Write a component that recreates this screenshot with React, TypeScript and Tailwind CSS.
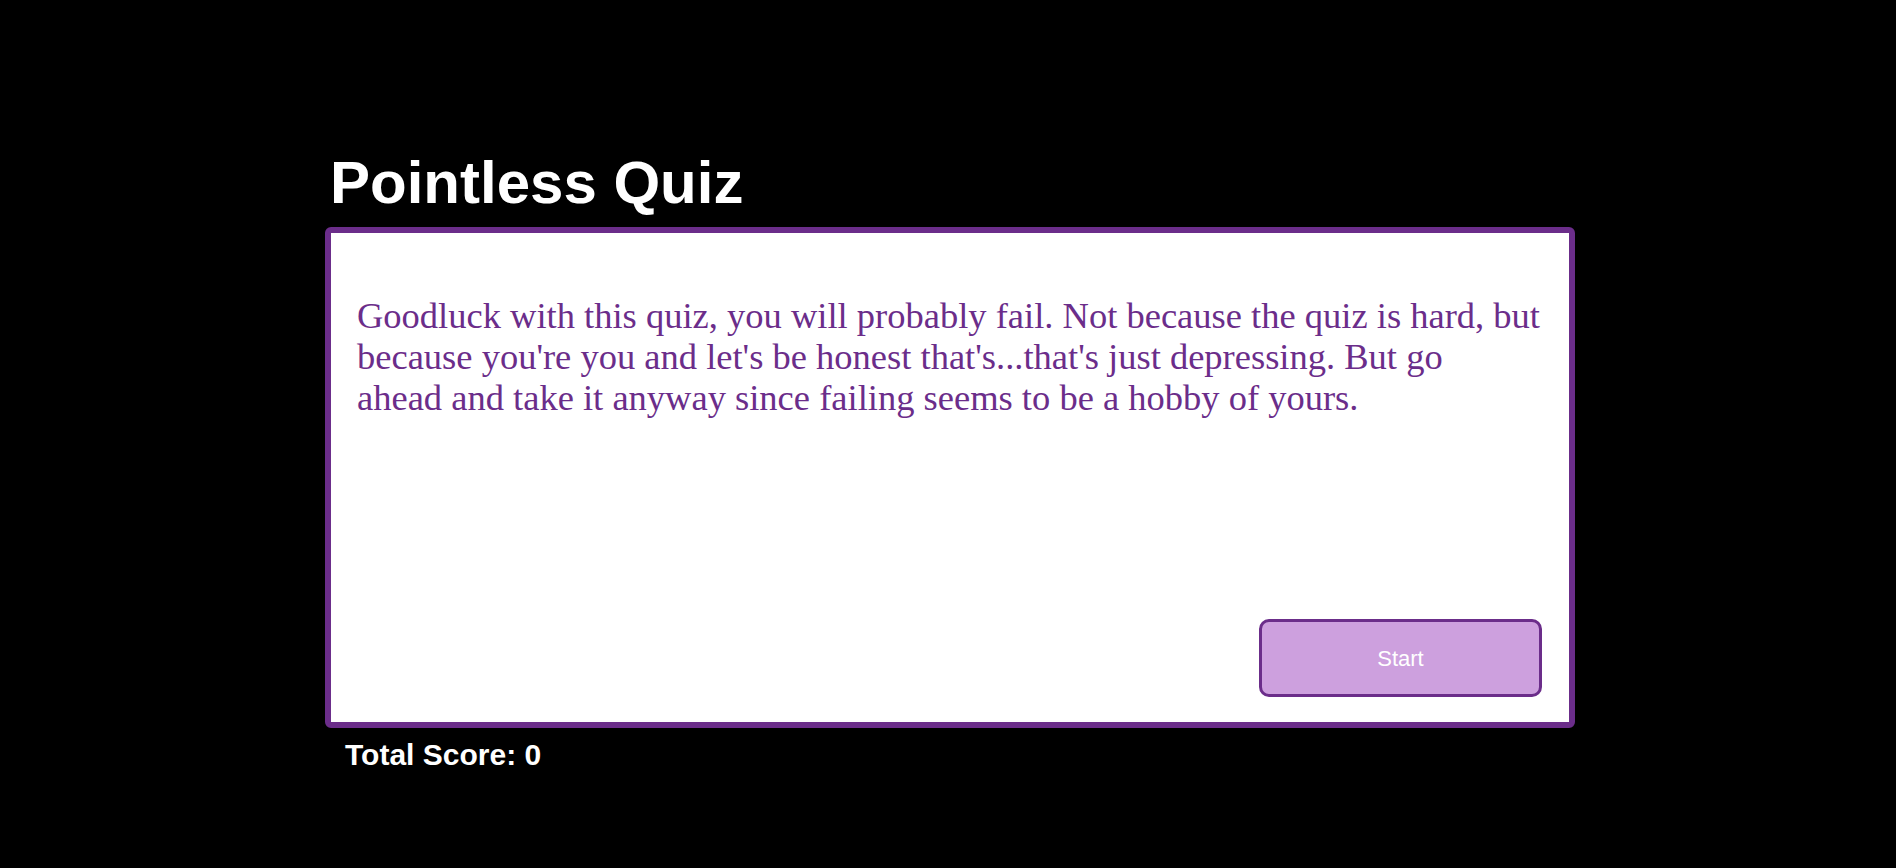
export default function App() {
  return (
    <div className="min-h-[868px] bg-black pt-[153px]">
      <div className="ml-[325px] w-[1250px]">
        <h1 className="ml-[5px] mb-[14px] text-[60px] leading-[60px] font-bold text-white font-['Liberation_Sans',Arial,sans-serif]">
          Pointless Quiz
        </h1>

        <div className="flex h-[501px] flex-col rounded-[6px] border-[6px] border-[#6b2d8a] bg-white">
          <p className="mt-[62px] ml-[26px] text-[36.5px] leading-[41px] text-[#6b2d8a] font-['Liberation_Serif','Times_New_Roman',serif]">
            Goodluck with this quiz, you will probably fail. Not because the quiz is hard, but
            <br />
            because you're you and let's be honest that's...that's just depressing. But go
            <br />
            ahead and take it anyway since failing seems to be a hobby of yours.
          </p>

          <button className="mt-auto mb-[25px] mr-[27px] self-end h-[78px] w-[283px] rounded-[10px] border-[3px] border-[#6b2d8a] bg-[#cda0de] text-[22px] text-white font-['Liberation_Sans',Arial,sans-serif]">
            Start
          </button>
        </div>

        <div className="mt-[12px] ml-[20px] text-[30px] leading-[30px] font-bold text-white font-['Liberation_Sans',Arial,sans-serif]">
          Total Score: 0
        </div>
      </div>
    </div>
  );
}
